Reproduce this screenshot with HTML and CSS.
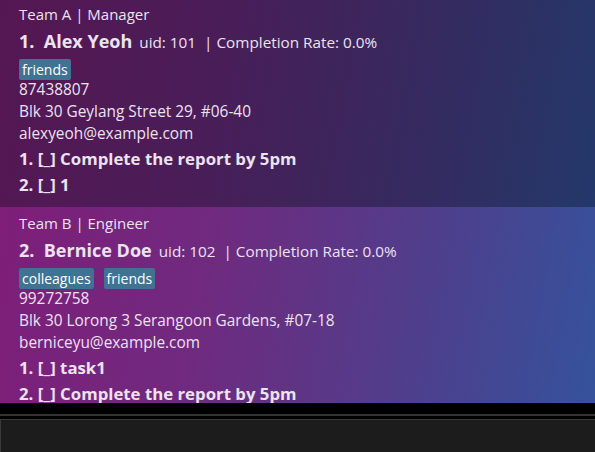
FILE: index.html
```html
<!DOCTYPE html>
<html>
<head>
<meta charset="utf-8">
<link rel="stylesheet" href="styles.css">
</head>
<body>
<div class="app">
  <div class="list">
    <div class="card card-a">
      <div class="team">Team A | Manager</div>
      <div class="head"><span class="name">1.&nbsp; Alex Yeoh</span><span class="meta">uid: 101 &nbsp;| Completion Rate: 0.0%</span></div>
      <div class="tags"><span class="tag">friends</span></div>
      <div class="line">87438807</div>
      <div class="line">Blk 30 Geylang Street 29, #06-40</div>
      <div class="line">alexyeoh@example.com</div>
      <div class="tasks">
        <div class="task">1. [_] Complete the report by 5pm</div>
        <div class="task">2. [_] 1</div>
      </div>
    </div>
    <div class="card card-b">
      <div class="team">Team B | Engineer</div>
      <div class="head"><span class="name">2.&nbsp; Bernice Doe</span><span class="meta">uid: 102 &nbsp;| Completion Rate: 0.0%</span></div>
      <div class="tags"><span class="tag">colleagues</span><span class="tag">friends</span></div>
      <div class="line">99272758</div>
      <div class="line">Blk 30 Lorong 3 Serangoon Gardens, #07-18</div>
      <div class="line">berniceyu@example.com</div>
      <div class="tasks">
        <div class="task">1. [_] task1</div>
        <div class="task">2. [_] Complete the report by 5pm</div>
      </div>
    </div>
  </div>
  <div class="sep"></div>
  <div class="box"></div>
</div>
</body>
</html>
```
FILE: styles.css
```css
html, body {
  margin: 0;
  padding: 0;
  background: #000;
}
.app {
  width: 595px;
  height: 452px;
  overflow: hidden;
  display: flex;
  flex-direction: column;
  font-family: "Open Sans", "Noto Sans", sans-serif;
  color: #ece2f0;
}
.list {
  height: 403px;
  overflow: hidden;
  flex: none;
}
.card {
  box-sizing: border-box;
  padding: 4px 0 0 19px;
}
.card-a {
  height: 207px;
  background: linear-gradient(100deg, #551753 0%, #4a1d58 35%, #352a5f 70%, #24386a 100%);
}
.card-b {
  height: 210px;
  padding-top: 6px;
  background: linear-gradient(100deg, #7e1e79 0%, #6f2a7f 35%, #4e3f8c 70%, #35529c 100%);
}
.team {
  font-size: 15px;
  line-height: 20px;
}
.head {
  display: flex;
  align-items: baseline;
  margin-top: 4px;
  line-height: 26px;
}
.name {
  font-size: 18px;
  font-weight: 700;
}
.meta {
  font-size: 15.3px;
  margin-left: 7px;
}
.tags {
  display: flex;
  gap: 10px;
  margin-top: 4px;
  margin-bottom: -1px;
}
.tag {
  background: #3f7391;
  color: #fff;
  font-size: 14px;
  line-height: 21px;
  padding: 0 3px;
  border-radius: 2px;
}
.line {
  font-size: 15.4px;
  line-height: 22px;
}
.tasks {
  margin-top: 1px;
}
.task {
  font-size: 16.8px;
  font-weight: 700;
  line-height: 26px;
}
.sep {
  height: 11px;
  flex: none;
  background: #000;
  border-bottom: 2px solid #333;
}
.box {
  flex: 1;
  margin-top: 3px;
  background: #1c1c1c;
  border-top: 1px solid #3a3a3a;
  border-left: 1px solid #3a3a3a;
}
```
